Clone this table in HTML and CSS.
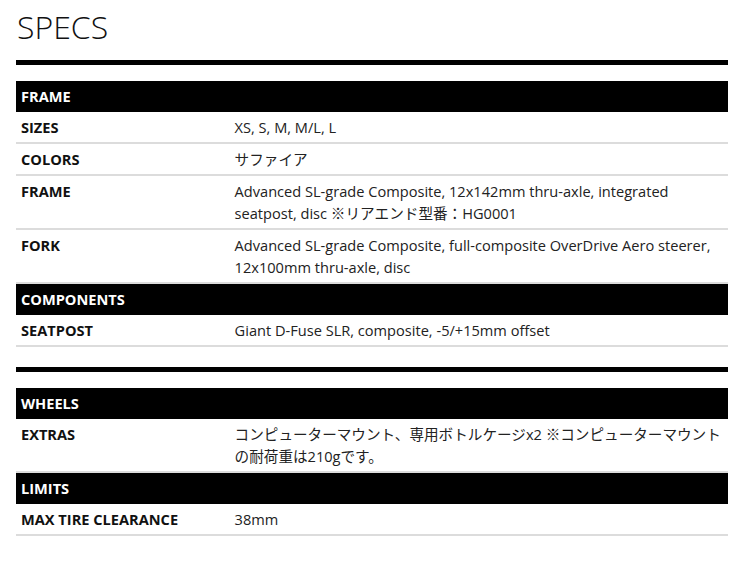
FILE: index.html
```html
<!DOCTYPE html>
<html lang="ja">
<head>
<meta charset="utf-8">
<title>SPECS</title>
<link rel="stylesheet" href="styles.css">
</head>
<body>
<div class="page">
  <h1 class="title">SPECS</h1>

  <div class="group">
    <table class="specs">
      <colgroup><col class="col-label"><col class="col-value"></colgroup>
      <tr class="head"><th colspan="2">FRAME</th></tr>
      <tr><td class="label">SIZES</td><td class="value">XS, S, M, M/L, L</td></tr>
      <tr><td class="label">COLORS</td><td class="value">サファイア</td></tr>
      <tr><td class="label">FRAME</td><td class="value">Advanced SL-grade Composite, 12x142mm thru-axle, integrated seatpost, disc ※リアエンド型番：HG0001</td></tr>
      <tr><td class="label">FORK</td><td class="value">Advanced SL-grade Composite, full-composite OverDrive Aero steerer, 12x100mm thru-axle, disc</td></tr>
      <tr class="head"><th colspan="2">COMPONENTS</th></tr>
      <tr><td class="label">SEATPOST</td><td class="value">Giant D-Fuse SLR, composite, -5/+15mm offset</td></tr>
    </table>
  </div>

  <div class="group">
    <table class="specs">
      <colgroup><col class="col-label"><col class="col-value"></colgroup>
      <tr class="head"><th colspan="2">WHEELS</th></tr>
      <tr><td class="label">EXTRAS</td><td class="value">コンピューターマウント、専用ボトルケージx2 ※コンピューターマウントの耐荷重は210gです。</td></tr>
      <tr class="head"><th colspan="2">LIMITS</th></tr>
      <tr><td class="label">MAX TIRE CLEARANCE</td><td class="value">38mm</td></tr>
    </table>
  </div>
</div>
</body>
</html>
```
FILE: styles.css
```css
html, body {
  margin: 0;
  padding: 0;
  background: #fff;
}

body {
  font-family: "Open Sans", "Noto Sans CJK JP", sans-serif;
  font-size: 14.6px;
  color: #1a1a1a;
}

.page {
  padding: 7px 12px 0 16px;
}

.title {
  margin: 0 0 13px 1px;
  font-family: "Open Sans", sans-serif;
  font-weight: 300;
  font-size: 32px;
  line-height: 40px;
  color: #111;
}

.group {
  border-top: 5px solid #000;
  padding-top: 16px;
  margin-bottom: 20px;
}

.specs {
  width: 100%;
  border-collapse: collapse;
  table-layout: fixed;
}

.col-label {
  width: 30%;
}

.col-value {
  width: 70%;
}

.specs th {
  background: #000;
  color: #fff;
  text-align: left;
  font-weight: 700;
  height: 31px;
  padding: 0 5px;
  line-height: 31px;
}

.specs td {
  padding: 4px 5px;
  line-height: 22px;
  border-bottom: 2px solid #dcdcdc;
  vertical-align: top;
}

.specs .label {
  font-weight: 700;
  color: #111;
}

.specs .value {
  color: #222;
}
```
